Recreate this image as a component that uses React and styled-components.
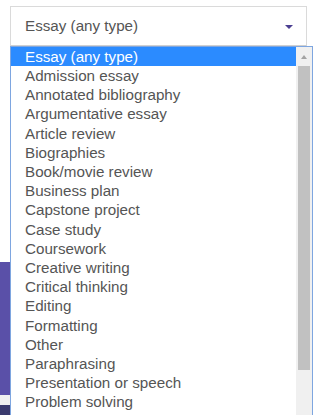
import React from 'react'
import styled, {createGlobalStyle} from 'styled-components'

const Global = createGlobalStyle`
html, body {
  margin: 0;
  padding: 0;
  background: #fff;
  overflow: hidden;
}
`

const items = [
  'Essay (any type)',
  'Admission essay',
  'Annotated bibliography',
  'Argumentative essay',
  'Article review',
  'Biographies',
  'Book/movie review',
  'Business plan',
  'Capstone project',
  'Case study',
  'Coursework',
  'Creative writing',
  'Critical thinking',
  'Editing',
  'Formatting',
  'Other',
  'Paraphrasing',
  'Presentation or speech',
  'Problem solving',
]

const Page = styled.div`
display: flex;
width: 313px;
height: 415px;
overflow: hidden;
font-family: 'Liberation Sans', Arial, sans-serif;
`

const Backdrop = styled.div`
width: 10px;
display: flex;
flex-direction: column;
flex-shrink: 0;
`

const Band = styled.div`
height: ${({h}) => h}px;
background: ${({c}) => c};
flex-shrink: 0;
`

const Widget = styled.div`
display: flex;
flex-direction: column;
padding-top: 6px;
width: 303px;
`

const Select = styled.div`
display: flex;
align-items: center;
justify-content: space-between;
box-sizing: border-box;
width: 297px;
height: 41px;
padding: 0 13px 0 14px;
border: 1px solid #dadada;
border-bottom-color: #d0d0d0;
color: #555;
font-size: 15.2px;
`

const Caret = styled.span`
width: 0;
height: 0;
border-left: 4.5px solid transparent;
border-right: 4.5px solid transparent;
border-top: 4px solid #4b3f91;
margin-top: 2px;
`

const List = styled.div`
display: flex;
border: 1px solid #7ea6e0;
border-bottom: none;
height: 380px;
box-sizing: border-box;
`

const Options = styled.ul`
list-style: none;
margin: 0;
padding: 0;
flex: 1;
`

const Option = styled.li`
height: 19.2px;
line-height: 19.2px;
padding-left: 14px;
font-size: 15.2px;
white-space: nowrap;
color: ${({active}) => (active ? '#fff' : '#555')};
background: ${({active}) => (active ? '#2b8bff' : 'transparent')};
`

const Scrollbar = styled.div`
width: 16px;
background: #f0f0f0;
display: flex;
flex-direction: column;
align-items: center;
`

const UpArrow = styled.span`
margin-top: 8px;
width: 0;
height: 0;
border-left: 3.5px solid transparent;
border-right: 3.5px solid transparent;
border-bottom: 4px solid #a3a3a3;
`

const Thumb = styled.div`
margin-top: 7px;
width: 12px;
height: 304px;
background: #c1c1c1;
`

const App = () => (
  <Page>
    <Global />
    <Backdrop>
      <Band h={262} c="#fff" />
      <Band h={133} c="#5a50a8" />
      <Band h={10} c="#f0f0f0" />
      <Band h={10} c="#3b3b6e" />
    </Backdrop>
    <Widget>
      <Select>
        <span>Essay (any type)</span>
        <Caret />
      </Select>
      <List>
        <Options>
          {items.map((it, i) => (
            <Option key={it} active={i === 0}>{it}</Option>
          ))}
        </Options>
        <Scrollbar>
          <UpArrow />
          <Thumb />
        </Scrollbar>
      </List>
    </Widget>
  </Page>
)

export default App
